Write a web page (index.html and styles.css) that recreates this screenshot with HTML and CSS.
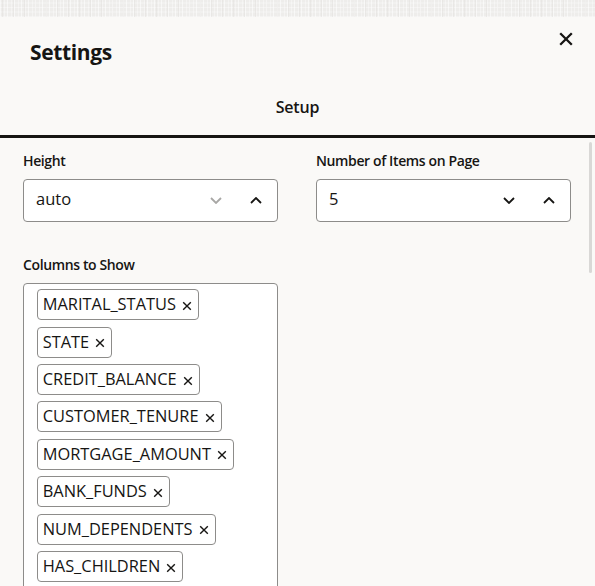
FILE: index.html
```html
<!DOCTYPE html>
<html lang="en">
<head>
<meta charset="utf-8">
<title>Settings</title>
<link rel="stylesheet" href="styles.css">
</head>
<body>
<div class="backdrop"></div>
<div class="dialog">
  <div class="dialog-header">
    <h1 class="dialog-title">Settings</h1>
    <button class="close-btn" aria-label="Close">
      <svg width="14" height="14" viewBox="0 0 14 14"><path d="M1.2 1.2 L12.8 12.8 M12.8 1.2 L1.2 12.8" stroke="#161513" stroke-width="2.3" fill="none"/></svg>
    </button>
  </div>
  <div class="tabbar">
    <div class="tab">Setup</div>
  </div>
  <div class="dialog-body">
    <div class="scroll-thumb"></div>
    <div class="form-grid">
      <div class="field">
        <label class="field-label">Height</label>
        <div class="input">
          <span class="input-value">auto</span>
          <span class="step-btn">
            <svg width="12" height="7" viewBox="0 0 12 7"><path d="M1 1 L6 6 L11 1" stroke="#a8a7a5" stroke-width="1.8" fill="none"/></svg>
          </span>
          <span class="step-btn">
            <svg width="12" height="7" viewBox="0 0 12 7"><path d="M1 6 L6 1 L11 6" stroke="#161513" stroke-width="1.8" fill="none"/></svg>
          </span>
        </div>
      </div>
      <div class="field">
        <label class="field-label">Number of Items on Page</label>
        <div class="input">
          <span class="input-value">5</span>
          <span class="step-btn">
            <svg width="12" height="7" viewBox="0 0 12 7"><path d="M1 1 L6 6 L11 1" stroke="#161513" stroke-width="1.8" fill="none"/></svg>
          </span>
          <span class="step-btn">
            <svg width="12" height="7" viewBox="0 0 12 7"><path d="M1 6 L6 1 L11 6" stroke="#161513" stroke-width="1.8" fill="none"/></svg>
          </span>
        </div>
      </div>
      <div class="field field-wide">
        <label class="field-label">Columns to Show</label>
        <div class="chip-box">
          <span class="chip">MARITAL_STATUS<svg class="chip-x" width="10" height="10" viewBox="0 0 10 10"><path d="M1.2 1.2 L8.8 8.8 M8.8 1.2 L1.2 8.8" stroke="#161513" stroke-width="1.4" fill="none"/></svg></span>
          <span class="chip">STATE<svg class="chip-x" width="10" height="10" viewBox="0 0 10 10"><path d="M1.2 1.2 L8.8 8.8 M8.8 1.2 L1.2 8.8" stroke="#161513" stroke-width="1.4" fill="none"/></svg></span>
          <span class="chip">CREDIT_BALANCE<svg class="chip-x" width="10" height="10" viewBox="0 0 10 10"><path d="M1.2 1.2 L8.8 8.8 M8.8 1.2 L1.2 8.8" stroke="#161513" stroke-width="1.4" fill="none"/></svg></span>
          <span class="chip">CUSTOMER_TENURE<svg class="chip-x" width="10" height="10" viewBox="0 0 10 10"><path d="M1.2 1.2 L8.8 8.8 M8.8 1.2 L1.2 8.8" stroke="#161513" stroke-width="1.4" fill="none"/></svg></span>
          <span class="chip">MORTGAGE_AMOUNT<svg class="chip-x" width="10" height="10" viewBox="0 0 10 10"><path d="M1.2 1.2 L8.8 8.8 M8.8 1.2 L1.2 8.8" stroke="#161513" stroke-width="1.4" fill="none"/></svg></span>
          <span class="chip">BANK_FUNDS<svg class="chip-x" width="10" height="10" viewBox="0 0 10 10"><path d="M1.2 1.2 L8.8 8.8 M8.8 1.2 L1.2 8.8" stroke="#161513" stroke-width="1.4" fill="none"/></svg></span>
          <span class="chip">NUM_DEPENDENTS<svg class="chip-x" width="10" height="10" viewBox="0 0 10 10"><path d="M1.2 1.2 L8.8 8.8 M8.8 1.2 L1.2 8.8" stroke="#161513" stroke-width="1.4" fill="none"/></svg></span>
          <span class="chip">HAS_CHILDREN<svg class="chip-x" width="10" height="10" viewBox="0 0 10 10"><path d="M1.2 1.2 L8.8 8.8 M8.8 1.2 L1.2 8.8" stroke="#161513" stroke-width="1.4" fill="none"/></svg></span>
        </div>
      </div>
    </div>
  </div>
</div>
</body>
</html>
```
FILE: styles.css
```css
html, body {
  margin: 0;
  height: 100%;
  overflow: hidden;
}
body {
  font-family: "Open Sans", "Noto Sans", sans-serif;
  color: #161513;
  background: #faf9f7;
  display: flex;
  flex-direction: column;
}
.backdrop {
  height: 17px;
  flex: none;
  background-color: #eeedeb;
  background-image:
    repeating-linear-gradient(90deg, rgba(255,255,255,0.55) 0 1px, transparent 1px 4px, rgba(255,255,255,0.35) 4px 5px, transparent 5px 7px),
    repeating-linear-gradient(90deg, transparent 0 2px, rgba(225,223,220,0.45) 2px 3px, transparent 3px 11px),
    repeating-linear-gradient(0deg, rgba(255,255,255,0.35) 0 1px, transparent 1px 4px, rgba(255,255,255,0.2) 4px 6px, transparent 6px 9px);
}
.dialog {
  flex: 1;
  display: flex;
  flex-direction: column;
  min-height: 0;
}
.dialog-header {
  display: flex;
  justify-content: space-between;
  align-items: flex-start;
  padding: 15px 22px 0 30px;
}
.dialog-title {
  margin: 6px 0 0;
  font-size: 21px;
  line-height: 28px;
  font-weight: 700;
  letter-spacing: -0.35px;
}
.close-btn {
  border: 0;
  padding: 0;
  background: none;
  width: 14px;
  height: 14px;
  display: block;
}
.close-btn svg { display: block; }
.tabbar {
  border-bottom: 3px solid #161513;
  padding: 29.5px 0 17.5px;
  display: flex;
  justify-content: center;
}
.tab {
  font-size: 16px;
  line-height: 22px;
  font-weight: 600;
  letter-spacing: -0.15px;
}
.dialog-body {
  position: relative;
  flex: 1;
  min-height: 0;
  overflow: hidden;
  padding: 12.6px 24px 0 23px;
}
.scroll-thumb {
  position: absolute;
  right: 3px;
  top: 4px;
  width: 3px;
  height: 131px;
  background: #d9d8d6;
  border-radius: 2px;
}
.form-grid {
  display: grid;
  grid-template-columns: 255px 255px;
  column-gap: 38px;
  row-gap: 32.3px;
}
.field-wide { grid-column: 1; }
.field-label {
  display: block;
  font-size: 14px;
  line-height: 20px;
  font-weight: 600;
  letter-spacing: -0.38px;
  margin-bottom: 8.7px;
}
.input {
  height: 43px;
  box-sizing: border-box;
  border: 1px solid #8d8c8a;
  border-radius: 4px;
  background: #fff;
  display: flex;
  align-items: center;
  padding: 0 1px 0 12px;
}
.input-value {
  flex: 1;
  font-size: 16.5px;
  line-height: 22px;
  padding-bottom: 3px;
}
.step-btn {
  width: 40px;
  height: 100%;
  display: flex;
  align-items: center;
  justify-content: center;
}
.step-btn svg { display: block; }
.chip-box {
  box-sizing: border-box;
  border: 1px solid #8d8c8a;
  border-radius: 4px;
  background: #fff;
  padding: 5px 12.7px 12px;
  display: flex;
  flex-direction: column;
  align-items: flex-start;
  gap: 6.4px;
}
.chip {
  box-sizing: border-box;
  height: 31px;
  border: 1px solid #8d8c8a;
  border-radius: 4px;
  display: flex;
  align-items: center;
  padding: 0 6px 1px 5px;
  font-size: 16.4px;
  line-height: 22px;
  white-space: nowrap;
}
.chip-x {
  display: block;
  margin-left: 6px;
  margin-top: 3px;
}
```
